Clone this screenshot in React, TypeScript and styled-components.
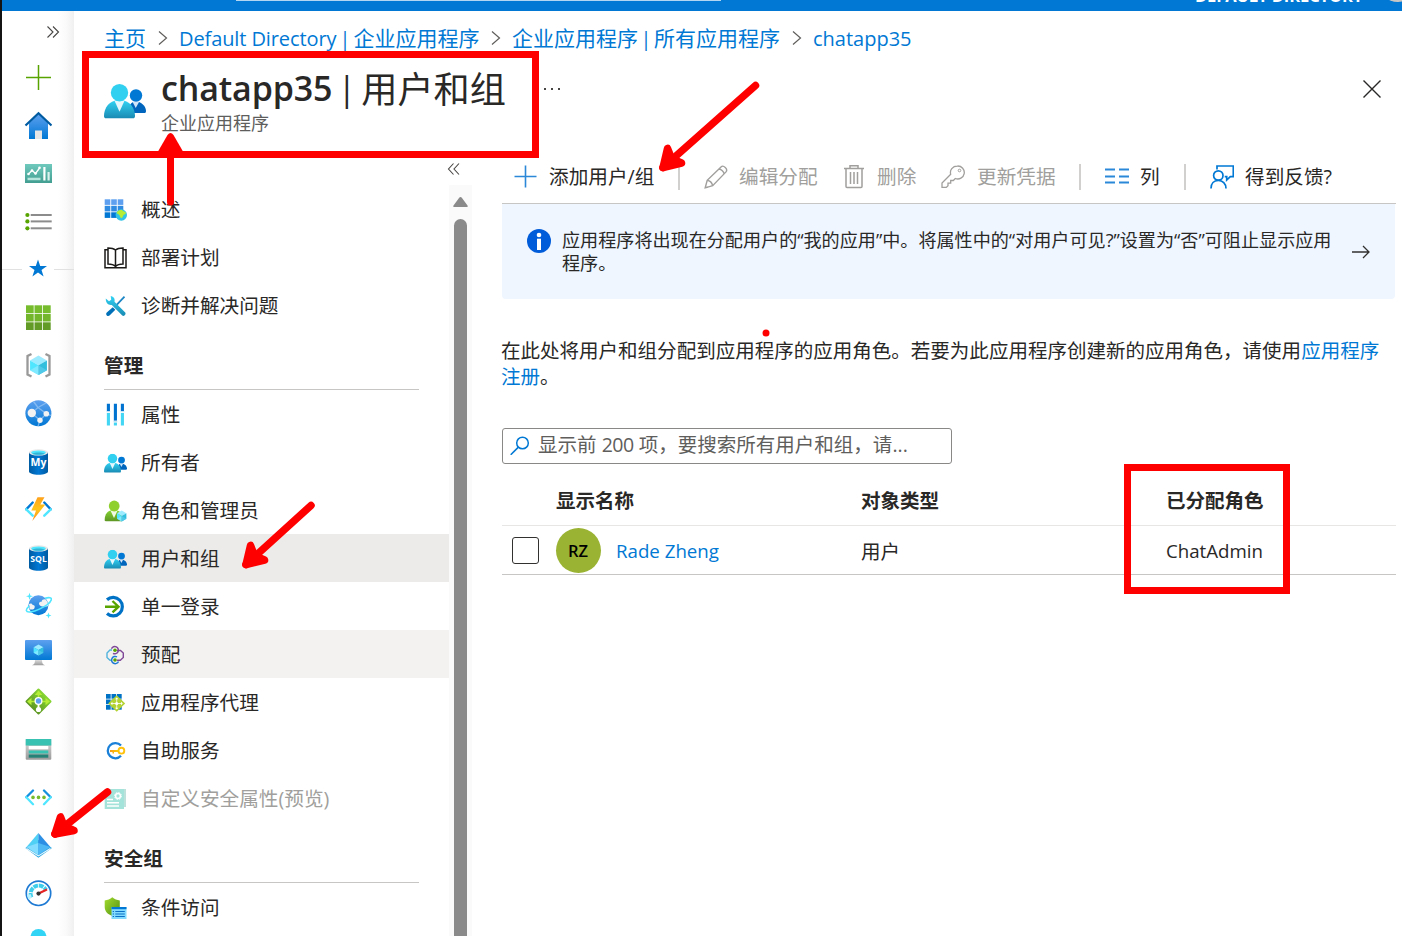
import React from "react";
import styled, { createGlobalStyle } from "styled-components";

const Global = createGlobalStyle`
  *, *::before, *::after { box-sizing: border-box; }
  body {
    margin: 0;
    overflow: hidden;
    background: #fff;
    color: #292827;
    font-family: "Open Sans", "Noto Sans CJK SC", sans-serif;
    font-size: 19.53px;
  }
  svg { display: block; flex: none; }
`;

const Portal = styled.div`
  position: relative;
  display: flex;
  width: 1402px;
  height: 936px;
  overflow: hidden;
`;
const WindowEdge = styled.div`
  flex: none;
  width: 2px;
  background: #141414;
`;
const Shell = styled.div`
  flex: 1;
  display: flex;
  flex-direction: column;
  min-width: 0;
`;
const TopBar = styled.header`
  flex: none;
  display: flex;
  height: 11px;
  background: #0078d4;
  overflow: hidden;
`;
const GlobalSearch = styled.div`
  flex: none;
  width: 485px;
  height: 1px;
  margin-left: 234px;
  background: #b3d7f2;
`;
const DirectoryName = styled.div`
  flex: none;
  margin: -15px 0 0 474px;
  width: 170px;
  height: 20px;
  color: #fff;
  font-size: 16.5px;
  line-height: 22px;
  font-weight: 700;
  letter-spacing: -0.1px;
  white-space: nowrap;
`;
const Account = styled.div`
  flex: none;
  width: 40px;
  height: 40px;
  margin: -38px 0 0 13px;
  border-radius: 50%;
  background: #c8c6c4;
`;
const Columns = styled.div`
  flex: 1;
  display: flex;
  min-height: 0;
`;
const Rail = styled.nav`
  flex: none;
  display: flex;
  flex-direction: column;
  width: 72px;
  background: linear-gradient(to right, #fff 56px, #fafafa 64px, #f0f0f0 72px);
  overflow: hidden;
`;
const RailToggle = styled.div`
  flex: none;
  display: flex;
  align-items: center;
  justify-content: flex-end;
  height: 42px;
  padding-right: 14px;
`;
const RailItem = styled.div`
  flex: none;
  display: flex;
  align-items: center;
  height: 48px;
  padding-left: 22px;
`;
const FavoriteRow = styled(RailItem)`
  padding-left: 0;
  gap: 2px;
`;
const Rule = styled.div<{ $w: number }>`
  width: ${(p) => p.$w}px;
  height: 1px;
  background: #e1e1e1;
`;
const Main = styled.main`
  flex: 1;
  display: flex;
  flex-direction: column;
  min-width: 0;
`;
const Breadcrumb = styled.div`
  flex: none;
  display: flex;
  align-items: center;
  height: 42px;
  padding: 12px 0 0 30px;
  color: #0078d4;
  font-size: 21px;
  line-height: 30px;
  white-space: nowrap;
`;
const Crumb = styled.span<{ $w: number }>`
  width: ${(p) => p.$w}px;
`;
const CrumbArrow = styled.span`
  display: flex;
  justify-content: center;
  width: 33px;
`;
const Latin = styled.span<{ $size?: number; $track?: number }>`
  font-size: ${(p) => (p.$size ? `${p.$size}px` : "inherit")};
  letter-spacing: ${(p) => p.$track ?? 0}px;
`;
const Pipe = styled.span<{ $w: number; $size: number }>`
  display: inline-block;
  width: ${(p) => p.$w}px;
  font-size: ${(p) => p.$size}px;
  text-align: center;
`;
const BladeHeader = styled.div`
  flex: none;
  display: flex;
  height: 105px;
  padding: 10px 20px 0 30px;
`;
const BladeIcon = styled.div`
  width: 57px;
  padding-top: 21px;
`;
const BladeTitles = styled.div`
  width: 380px;
`;
const Title = styled.h1`
  display: flex;
  height: 50px;
  margin: 0;
  font-size: 36.2px;
  line-height: 50px;
  font-weight: 400;
  white-space: pre;
  strong { font-weight: 600; font-size: 34px; letter-spacing: -0.15px; }
  em { font-style: normal; padding-top: 1px; }
`;
const Subtitle = styled.div`
  color: #605e5c;
  font-size: 18px;
  line-height: 20px;
`;
const MoreDots = styled.div`
  display: flex;
  gap: 5px;
  padding: 25px 0 0 3px;
  i { width: 2px; height: 2px; background: #484644; }
`;
const CloseButton = styled.div`
  margin-left: auto;
  padding-top: 16px;
`;
const Body = styled.div`
  flex: 1;
  display: flex;
  min-height: 0;
`;
const Menu = styled.aside`
  flex: none;
  width: 375px;
  padding-top: 28px;
  overflow: hidden;
  font-size: 19.65px;
`;
const MenuItem = styled.div<{ $bg?: string; $muted?: boolean }>`
  display: flex;
  align-items: center;
  gap: 14px;
  height: 48px;
  padding: 0 0 0 29px;
  line-height: 28px;
  background: ${(p) => p.$bg ?? "transparent"};
  color: ${(p) => (p.$muted ? "#a19f9d" : "inherit")};
  white-space: nowrap;
`;
const MenuLabel = styled.span<{ $drop: number }>`
  padding-top: ${(p) => p.$drop * 2}px;
`;
const MenuSection = styled.div<{ $h: number }>`
  height: ${(p) => p.$h}px;
  margin: 0 30px;
  padding-top: 22px;
  border-bottom: 1px solid #c8c6c4;
  font-weight: 700;
  line-height: ${(p) => p.$h - 32}px;
`;
const ScrollColumn = styled.div`
  flex: none;
  display: flex;
  flex-direction: column;
  align-items: center;
  width: 23px;
`;
const Collapse = styled.div`
  flex: none;
  width: 23px;
  height: 27px;
  padding-top: 4px;
  svg { margin-left: -2px; }
`;
const Track = styled.div`
  flex: 1;
  display: flex;
  flex-direction: column;
  align-items: center;
  width: 23px;
  padding-top: 12px;
  background: #fafafa;
`;
const Thumb = styled.div`
  flex: 1;
  width: 13px;
  margin: 12px 0 0 -1px;
  border-radius: 7px 7px 0 0;
  background: #8a8a8a;
`;
const Content = styled.section`
  flex: 1;
  display: flex;
  flex-direction: column;
  min-width: 0;
  padding: 0 7px 0 30px;
`;
const Toolbar = styled.div`
  flex: none;
  display: flex;
  align-items: center;
  height: 46px;
  margin-right: -1px;
  padding: 0 0 8px 11px;
  border-bottom: 1px solid #c8c6c4;
  font-size: 19.65px;
  line-height: 28px;
  white-space: nowrap;
`;
const Command = styled.div<{ $w: number; $gap: number; $muted?: boolean }>`
  flex: none;
  display: flex;
  align-items: center;
  gap: ${(p) => p.$gap}px;
  width: ${(p) => p.$w}px;
  color: ${(p) => (p.$muted ? "#a19f9d" : "inherit")};
`;
const Separator = styled.div<{ $after: number }>`
  flex: none;
  width: 2px;
  height: 26px;
  margin-right: ${(p) => p.$after}px;
  background: #d2d0ce;
`;
const Banner = styled.div`
  flex: none;
  display: flex;
  height: 95px;
  padding: 25px 24px 0 25px;
  border-radius: 0 0 4px 4px;
  background: #eff6ff;
`;
const BannerText = styled.div`
  flex: none;
  width: 782px;
  margin: 0 5px 0 11px;
  font-size: 18.1px;
  line-height: 23px;
  white-space: nowrap;
`;
const BannerArrow = styled.div`
  padding-top: 13px;
  margin-left: 2px;
`;
const Intro = styled.p`
  margin: 39px 0 0 -1px;
  line-height: 26px;
  white-space: nowrap;
  a { color: #0078d4; }
`;
const SearchBox = styled.div`
  flex: none;
  display: flex;
  align-items: center;
  gap: 8px;
  width: 450px;
  height: 36px;
  margin-top: 38px;
  padding: 0 7px 2px;
  border: 1px solid #8a8886;
  border-radius: 3px;
  color: #605e5c;
  line-height: 28px;
  white-space: nowrap;
`;
const Table = styled.div`
  flex: none;
  margin: 11px -1px 0 0;
`;
const TableRow = styled.div<{ $head?: boolean }>`
  display: grid;
  grid-template-columns: 54px 305px 305px 1fr;
  align-items: center;
  height: ${(p) => (p.$head ? 51 : 49)}px;
  padding-bottom: ${(p) => (p.$head ? 2 : 0)}px;
  border-bottom: 1px solid ${(p) => (p.$head ? "#e8e6e4" : "#c8c6c4")};
  font-weight: ${(p) => (p.$head ? 700 : 400)};
`;
const CheckBox = styled.div`
  width: 27px;
  height: 27px;
  margin-left: 10px;
  border: 1.5px solid #323130;
  border-radius: 3px;
`;
const Person = styled.div`
  display: flex;
  align-items: center;
  gap: 15px;
  color: #0078d4;
`;
const Avatar = styled.div`
  display: flex;
  align-items: center;
  justify-content: center;
  width: 45px;
  height: 45px;
  padding-right: 1px;
  border-radius: 50%;
  background: #9ab333;
  color: #000;
  font-size: 16.5px;
  font-weight: 600;
`;
const Highlight = styled.div<{ $x: number; $y: number; $w: number; $h: number }>`
  position: absolute;
  left: ${(p) => p.$x}px;
  top: ${(p) => p.$y}px;
  width: ${(p) => p.$w}px;
  height: ${(p) => p.$h}px;
  border: 7px solid #f00;
`;
const Annotations = styled.svg`
  position: absolute;
  inset: 0;
`;
const GradientDefs = styled.svg`
  position: absolute;
`;

type Kids = { children?: React.ReactNode };
const R = ({ children }: Kids) => (
  <svg width="28" height="28" viewBox="0 0 28 28" fill="none">{children}</svg>
);
const M = ({ children, o }: Kids & { o?: number }) => (
  <svg width="24" height="24" viewBox="0 0 24 24" fill="none" opacity={o}>{children}</svg>
);

const Gradients = () => (
  <GradientDefs width="0" height="0">
    <defs>
      <linearGradient id="blue" x1="0" y1="0" x2="0" y2="1"><stop offset="0" stopColor="#5ea0ef" /><stop offset="1" stopColor="#0078d4" /></linearGradient>
      <linearGradient id="cyan" x1="0" y1="0" x2="0" y2="1"><stop offset="0" stopColor="#32d4f5" /><stop offset="1" stopColor="#198ab3" /></linearGradient>
      <linearGradient id="green" x1="0" y1="0" x2="0" y2="1"><stop offset="0" stopColor="#86d633" /><stop offset="1" stopColor="#5e9624" /></linearGradient>
      <linearGradient id="teal" x1="0" y1="0" x2="0" y2="1"><stop offset="0" stopColor="#6fcabd" /><stop offset="1" stopColor="#429e90" /></linearGradient>
      <linearGradient id="db" x1="0" y1="0" x2="1" y2="0"><stop offset="0" stopColor="#005ba1" /><stop offset="0.5" stopColor="#0078d4" /><stop offset="1" stopColor="#005ba1" /></linearGradient>
      <linearGradient id="bolt" x1="0" y1="0" x2="0" y2="1"><stop offset="0" stopColor="#fea11b" /><stop offset="0.5" stopColor="#fec51b" /><stop offset="1" stopColor="#fe8a1b" /></linearGradient>
      <linearGradient id="shield" x1="0" y1="0" x2="1" y2="1"><stop offset="0" stopColor="#a4dc2e" /><stop offset="1" stopColor="#4f8f12" /></linearGradient>
      <linearGradient id="grey" x1="0" y1="0" x2="0" y2="1"><stop offset="0" stopColor="#ddd" /><stop offset="1" stopColor="#9a9a9a" /></linearGradient>
      <linearGradient id="key" x1="0" y1="0" x2="1" y2="0"><stop offset="0" stopColor="#f79a1c" /><stop offset="1" stopColor="#ffd400" /></linearGradient>
    </defs>
  </GradientDefs>
);

const Grid9 = ({ x, y, s, g, fill }: { x: number; y: number; s: number; g: number; fill: string[] }) => (
  <>
    {[0, 1, 2].map((j) => [0, 1, 2].map((i) => (
      <rect key={`${i}${j}`} x={x + i * (s + g)} y={y + j * (s + g)} width={s} height={s} fill={fill[j]} />
    )))}
  </>
);
const Cube = ({ x, y, k }: { x: number; y: number; k: number }) => (
  <g transform={`translate(${x} ${y}) scale(${k})`}>
    <path d="M0-10 8.7-5 0 0-8.7-5z" fill="#9cebff" />
    <path d="M-8.7-5 0 0V10L-8.7 5z" fill="#50e6ff" />
    <path d="M8.7-5 0 0V10L8.7 5z" fill="#32bedd" />
    <path d="M-8.7 5 0 0 0 10z" fill="#9cebff" opacity=".6" />
    <path d="M0 0 8.7 5 0 10z" fill="#50c8e8" />
  </g>
);
const Database = ({ label, size }: { label: string; size: number }) => (
  <R>
    <path d="M5 5.3v19.2c0 1.8 4.3 3.2 9.5 3.2s9.500-1.400 9.500-3.200V5.300z" fill="url(#db)" />
    <ellipse cx="14.500" cy="5.400" rx="9.500" ry="3.200" fill="#e8e8e8" />
    <ellipse cx="14.500" cy="5.600" rx="7.400" ry="2.200" fill="#50e6ff" />
    <path d="M8 6.700c1.600-.7 3.800-1.100 6.500-1.100s4.900.4 6.500 1.100c-1.300.7-3.700 1.100-6.500 1.100s-5.200-.4-6.500-1.100z" fill="#32b4d4" />
    <text x="14.500" y="19.300" textAnchor="middle" fontSize={size} fontWeight="700" fill="#fff" fontFamily="Open Sans">{label}</text>
  </R>
);

const railIcons: React.ReactNode[] = [
  <R><path d="M2 14.500h25M14.500 2v25" stroke="#57a300" strokeWidth="1.500" /></R>,
  <R>
    <path d="M14.500 3 24 12v16H5V12z" fill="url(#blue)" />
    <path d="M11 28v-8.500h7V28z" fill="#e6e6e6" />
    <path d="M1.500 14.500 14.500 2.300 27.500 14.500" stroke="#005ba1" strokeWidth="2.200" />
  </R>,
  <R>
    <rect x="1" y="5" width="27" height="19" fill="url(#teal)" />
    <path d="M4.500 15 8 11.500l3.500 3 4.500-6" stroke="#fff" strokeWidth="1.300" />
    <circle cx="4.500" cy="15" r="1.300" fill="#fff" /><circle cx="8" cy="11.500" r="1.300" fill="#fff" />
    <circle cx="11.500" cy="14.500" r="1.300" fill="#fff" /><circle cx="15.500" cy="8.700" r="1.300" fill="#fff" />
    <path d="M3.500 18.700h13v2.500h-13z" fill="#b5e5dd" />
    <path d="M19.300 8h2.200v13.500h-2.200z" fill="#fff" /><path d="M23.500 13h2.200v8.500h-2.200z" fill="#d8f1ed" />
  </R>,
  <R>
    {[8, 14.4, 21.3].map((y) => (
      <g key={y}><circle cx="3.400" cy={y} r="2.100" fill="#57a300" /><path d={`M6.700 ${y}H27.700`} stroke="#8c8c8c" strokeWidth="2" /></g>
    ))}
  </R>,
  null,
  <R><g><Grid9 x={2} y={2.300} s={7.700} g={0.800} fill={["#76bc2d", "#73b62b", "#629b25"]} /></g></R>,
  <R>
    <path d="M7.500 3 3.500 5v18.500l4 2M21.500 3l4 2v18.500l-4 2" stroke="#999" strokeWidth="2.300" />
    <Cube x={14.500} y={14.300} k={0.970} />
  </R>,
  <R>
    <circle cx="14.400" cy="14.300" r="13" fill="url(#blue)" />
    <path d="M7.700 14 14 8.500l8.300 6.200L16 21.300zM14 8.500 9.500 2.500M14 8.500l8-4.500M16 21.300l-2 6M22.300 14.700l4.700 2" stroke="#9cc9f5" strokeWidth="1.300" opacity=".7" />
    <circle cx="7.800" cy="14" r="4.200" fill="#f2f2f2" /><circle cx="22.300" cy="14.700" r="2.800" fill="#f2f2f2" /><circle cx="16" cy="21.300" r="2.700" fill="#f2f2f2" />
  </R>,
  <Database label="My" size={10.500} />,
  <R>
    <path d="M8.700 7.500 2.300 14.300" stroke="#0078d4" strokeWidth="2.400" strokeLinecap="round" /><path d="m2.300 14.300 6.400 6.400" stroke="#50e6ff" strokeWidth="2.400" strokeLinecap="round" />
    <path d="m20.300 7.500 6.400 6.800" stroke="#0078d4" strokeWidth="2.400" strokeLinecap="round" /><path d="m26.700 14.300-6.400 6.400" stroke="#50e6ff" strokeWidth="2.400" strokeLinecap="round" />
    <path d="M13.500 2.300h7l-4.200 7.200h5L8.300 26l3.700-10.500H7.300z" fill="url(#bolt)" />
  </R>,
  <Database label="SQL" size={8.700} />,
  <R>
    <circle cx="14.400" cy="14.300" r="10" fill="url(#blue)" />
    <path d="M5 13c1.500-1 3-.5 3.500.8 2 .2 2.700 1.700 2 3.200-.5 1.500-2.500 1.800-5 1.300zM15 12.500c.2-1.500 1.600-1.700 2.600-1.700C18 8.500 20 8 21.700 8.500c2 2 2.700 5 2.400 6.500-2.700.8-8.800 1.200-9.100-2.500z" fill="#f2f2f2" />
    <path d="M21 7.300c4-1.200 6.700-.8 6.400 1-.4 2.600-5.400 6.600-12 9.800-6.600 3.100-12.500 3.900-13 1.600-.3-1.400 1.100-3.100 3-4.800" stroke="#50e6ff" strokeWidth="1.600" />
    <path d="M5.500 1.700 6.400 4.500 9 5.300 6.400 6.100 5.500 9l-.9-2.900L2 5.300l2.600-.8zM24.500 21.500l.8 2.200 2.200.8-2.200.8-.8 2.200-.8-2.200-2.200-.8 2.200-.8z" fill="#50e6ff" />
  </R>,
  <R>
    <rect x="1" y="1" width="27" height="20" rx="1" fill="url(#blue)" />
    <path d="M11 21h7c0 3 .6 4.300 3 5.300H8c2.400-1 3-2.300 3-5.300z" fill="url(#grey)" />
    <Cube x={14.500} y={11} k={0.560} />
  </R>,
  <R>
    <rect x="5" y="5" width="19" height="19" rx="1" transform="rotate(45 14.500 14.500)" fill="url(#green)" />
    <path d="M14.500 4.500v20M5 14.500h19" stroke="#b4ec36" strokeWidth="1.700" />
    <path d="m10.800 8 3.700-4.500L18.200 8zM7.500 10.800 3 14.500l4.500 3.700zM21.500 10.800l4.500 3.700-4.500 3.700z" fill="#b4ec36" />
    <path d="M14.500 16v6" stroke="#fff" strokeWidth="1.700" />
    <circle cx="14.500" cy="14" r="4" fill="#fff" /><circle cx="14.500" cy="14" r="2.700" fill="#5ea0ef" /><circle cx="14.500" cy="22.500" r="2.600" fill="#fff" />
  </R>,
  <R>
    <rect x="1.700" y="4" width="25.600" height="20.700" rx="1" fill="url(#grey)" />
    <path d="M1.700 4h25.600v6.500H1.700z" fill="#37c2b1" /><path d="M4.700 11h19.600v3.300H4.700z" fill="#fff" />
    <path d="M4.700 15.500h19.600v3H4.700z" fill="#37c2b1" /><path d="M4.700 19.500h19.600v3.200H4.700z" fill="#258277" />
  </R>,
  <R>
    <path d="M9 7.500 2.300 14.300M20 7.500l6.700 6.800" stroke="#1490df" strokeWidth="2.300" strokeLinecap="round" />
    <path d="M2.300 14.300 9 21.200M26.700 14.300 20 21.200" stroke="#50e6ff" strokeWidth="2.300" strokeLinecap="round" />
    <circle cx="9" cy="14.400" r="1.800" fill="#76bc2d" /><circle cx="14.500" cy="14.400" r="1.800" fill="#76bc2d" /><circle cx="20" cy="14.400" r="1.800" fill="#76bc2d" />
  </R>,
  <R>
    <path d="M1.300 17 14.400 9 28 17l-13.600 9.700z" fill="#2ea7e0" />
    <path d="M14.400 2 2.500 16l11.900 8z" fill="#50d0f5" /><path d="m14.400 2 12 14-12 8z" fill="#2c8fe4" />
    <path d="M14.400 12 2.500 16l11.900 8z" fill="#84dcff" /><path d="m14.400 12 12 4-12 8z" fill="#4db8f4" />
    <path d="m2.500 17.500 11.900 7.400 12-7.400" stroke="#e8f8ff" strokeWidth="1.200" />
  </R>,
  <R>
    <circle cx="14.500" cy="14.300" r="12.200" fill="#fff" stroke="#1f7ad4" strokeWidth="1.700" />
    <path d="M7.500 18.500A8 8 0 1 1 22 11" stroke="#3fcdec" strokeWidth="4" strokeDasharray="4.700 .8" />
    <path d="M6.200 19.500a9.500 9.500 0 0 1-1.200-4" stroke="#b8f2ff" strokeWidth="4" />
    <path d="m14.500 14.500 8.500-4" stroke="#e62323" strokeWidth="2" /><circle cx="14.500" cy="14.600" r="2.100" fill="#333" />
  </R>,
  <R><circle cx="14.500" cy="10" r="8" fill="#32d4f5" /><path d="M2 28c0-12 10-18 12.500-18S27 16 27 28z" fill="#32c4e5" /></R>,
];

const PeopleShapes = () => (
  <>
    <circle cx="32" cy="11.500" r="6.200" fill="#0078d4" />
    <path d="M24 29c0-7 3-11.500 8-11.500S42 22 42 27c0 1.500-.6 2-1.500 2z" fill="#0065bd" />
    <path d="m28.500 17.800 3.200 6.200 3.500-6.200z" fill="#cfe6fa" />
    <path d="M0 32c0-8 5-16 15.500-16S31 24 31 32c0 1.500-.8 2.300-2 2.300H2C.8 34.300 0 33.500 0 32z" fill="url(#cyan)" />
    <path d="m10.500 16.800 5 11 5-11z" fill="#e3f7fd" />
    <circle cx="15.500" cy="8.700" r="8.700" fill="#32d0f0" />
  </>
);

const icons = {
  overview: (
    <M>
      <g><Grid9 x={1.700} y={1.300} s={5.600} g={0.900} fill={["#5ea0ef", "#2f8ae2", "#0078d4"]} /></g>
      <circle cx="18.300" cy="17" r="5.700" fill="#32c4e5" />
      <path d="M13.500 15c1-2.300 3-3 5-3.200 1.500 1 2.700 2 4.300 2.500.3 1.800-1.300 2.300-2.300 2.700-.5 1.500-1 3-2.200 3.200-1.600-.8-1-3-2.300-3.500z" fill="#b4ec36" />
    </M>
  ),
  book: (
    <M><path d="M5 3.800H2V21.800H23V3.800H20M12.500 4C10.500 2.300 8 2 5 2v16c3 0 5.500.4 7.500 2.600C14.500 18.400 17 18 20 18V2c-3 0-5.500.3-7.500 2zV20.600M2 21.800h21" stroke="#1b1a19" strokeWidth="1.500" /></M>
  ),
  tools: (
    <M>
      <path d="m21.500 2.700-10 10.500" stroke="#1c86c4" strokeWidth="1.800" />
      <path d="m9.800 13.200 2.500 2.500-5.500 5.600c-.9.900-2.200.9-3 .1s-.9-2.100 0-3z" fill="#0070b8" />
      <path d="M2.800 4.600 6 7.200l2.200-1.400L7.700 2c3 .3 4.600 3 3.800 5.700L22 18.300c1.800 2-1.100 4.800-3 3L8.800 10.900C5.700 11.700 2.500 9 2.800 4.600z" fill="url(#cyan)" />
    </M>
  ),
  props: (
    <M>
      <path d="M5.400 1.700V9M12.400 1.700v17M19.400 1.700V9" stroke="#0072d0" strokeWidth="3.100" />
      <path d="M5.400 11v12.500M12.400 20.500v3M19.400 11v12.500" stroke="#43d6f4" strokeWidth="3.100" />
      <path d="M3.500 9.700h3.800M10.500 19.500h3.800M17.500 9.700h3.800" stroke="#c5e4f3" strokeWidth="1.300" />
    </M>
  ),
  people: (
    <M><svg x="1" y="3.800" width="23" height="19.200" viewBox="0 0 42 35" fill="none"><PeopleShapes /></svg></M>
  ),
  roles: (
    <M>
      <path d="M1.700 22c0-6 3-10 9.300-10s8.700 4 8.700 10c0 .8-.4 1.200-1 1.200H2.700c-.6 0-1-.4-1-1.200z" fill="url(#green)" />
      <path d="m7.700 13 3.300 7 3.300-7z" fill="#f2fbe2" /><circle cx="11.200" cy="8" r="5.400" fill="#8fd02e" />
      <Cube x={18.700} y={18} k={0.540} />
    </M>
  ),
  sso: (
    <M>
      <path d="M4 5.800a9.200 9.200 0 1 1 0 13.700" stroke="#0072c6" strokeWidth="3.200" />
      <path d="M2 12.700h13.500M9.500 7l6 5.700-6 5.700" stroke="#57a300" strokeWidth="2.400" />
    </M>
  ),
  provision: (
    <M>
      <path d="M9 8H7l-3 3v4.500l3 2.700h2" stroke="#50b3dc" strokeWidth="1.400" /><path d="M14 8.500h3.500l2.800 2.500v4.500l-3 2.700H14" stroke="#804998" strokeWidth="1.400" />
      <path d="M8.500 6.700A3.600 3.600 0 1 1 10 11.300" stroke="#804998" strokeWidth="1.500" /><path d="M15.500 19.500A3.600 3.600 0 1 1 14 14.900" stroke="#1f7ad4" strokeWidth="1.500" />
      <circle cx="12" cy="8.300" r="1.800" fill="#57a300" /><circle cx="12" cy="18" r="1.800" fill="#57a300" />
    </M>
  ),
  proxy: (
    <M>
      <g><Grid9 x={3} y={4} s={4.700} g={0.800} fill={["#0072c6", "#0072c6", "#0072c6"]} /></g>
      <path d="m13.700 5.300 8.500 8.200-8.500 8.200-8.500-8.200z" fill="#b3d334" />
      <path d="M13.700 8.500v10M8.500 13.500h10.500" stroke="#fff" strokeWidth=".8" /><circle cx="13.700" cy="13.500" r="1.600" fill="#fff" />
      <path d="m12 9.300 1.700-1.800 1.700 1.800zM12 17.700l1.700 1.800 1.700-1.800zM9.400 11.800l-1.800 1.700 1.800 1.700zM18 11.800l1.800 1.700-1.800 1.700z" fill="#fff" />
    </M>
  ),
  selfService: (
    <M>
      <path d="M18 7.600a7.600 7.600 0 1 0 0 10.200" stroke="#1a80d8" strokeWidth="2.300" />
      <path d="M7 12h9v2h-5v1.600H9.500V14H7z" fill="url(#key)" />
      <circle cx="18.400" cy="12.700" r="2.900" stroke="#ffc20e" strokeWidth="1.900" />
    </M>
  ),
  attributes: (
    <M o={0.500}>
      <path d="M6 3h17v18H6z" fill="#7fc4b8" /><path d="M1.700 3H21v20H1.700z" fill="#4cc8b6" />
      <circle cx="15" cy="10" r="2.400" stroke="#fff" strokeWidth="1.500" />
      <circle cx="15" cy="10" r="3.500" stroke="#fff" strokeWidth="1" strokeDasharray="1.400 1.350" />
      <path d="M4 13.500h6M4 16.800h12M4 20h12" stroke="#fff" strokeWidth="1.400" />
    </M>
  ),
  shield: (
    <M>
      <path d="M1.700 5.500C4.500 5.300 7.200 4 9.300 2.300 11.500 4 14 5.300 16.800 5.500V12c0 4.500-3.300 7.500-7.500 9-4.200-1.500-7.600-4.500-7.600-9z" fill="url(#shield)" />
      <path d="M8.500 12H23.500V24H8.500z" fill="#83dcff" /><path d="M8.500 12H23.500v2.200H8.500z" fill="#0078d4" />
      <path d="M12.300 16.500h9.500M12.300 19h9.500M12.300 21.500h9.500" stroke="#0b6fc8" strokeWidth="1.100" /><path d="M9.700 16.500h1.300M9.700 19h1.300M9.700 21.500h1.300" stroke="#0b6fc8" strokeWidth="1.100" />
    </M>
  ),
};

const Chevrons = ({ left }: { left?: boolean }) => (
  <svg width="14" height="14" viewBox="0 0 14 14" fill="none">
    <path d={left ? "M6.500 1.500 1.500 7l5 5.500M12 1.500 7 7l5 5.500" : "M1.500 1.500 7 7l-5.500 5.500M7 1.500 12.500 7 7 12.500"} stroke="#484644" strokeWidth="1.100" />
  </svg>
);
const Separation = () => (
  <CrumbArrow><svg width="10" height="16" viewBox="0 0 10 16" fill="none"><path d="m1 1.500 7.500 6.500L1 14.500" stroke="#605e5c" strokeWidth="1.200" /></svg></CrumbArrow>
);

type Entry = { icon: React.ReactNode; label: string; bg?: string; muted?: boolean };
const general: Entry[] = [
  { icon: icons.overview, label: "概述" },
  { icon: icons.book, label: "部署计划" },
  { icon: icons.tools, label: "诊断并解决问题" },
];
const manage: Entry[] = [
  { icon: icons.props, label: "属性" },
  { icon: icons.people, label: "所有者" },
  { icon: icons.roles, label: "角色和管理员" },
  { icon: icons.people, label: "用户和组", bg: "#edebe9" },
  { icon: icons.sso, label: "单一登录" },
  { icon: icons.provision, label: "预配", bg: "#f3f2f1" },
  { icon: icons.proxy, label: "应用程序代理" },
  { icon: icons.selfService, label: "自助服务" },
  { icon: icons.attributes, label: "自定义安全属性(预览)", muted: true },
];
const security: Entry[] = [{ icon: icons.shield, label: "条件访问" }];

const Entries = ({ list, drop = 0 }: { list: Entry[]; drop?: number }) => (
  <>
    {list.map((e) => (
      <MenuItem key={e.label} $bg={e.bg} $muted={e.muted}>{e.icon}<MenuLabel $drop={drop}>{e.label}</MenuLabel></MenuItem>
    ))}
  </>
);

type Point = [number, number];
const Arrow = ({ tail, tip, a, b }: { tail: Point; tip: Point; a: Point; b: Point }) => {
  const notch = [0, 1].map((i) => ((a[i] + b[i]) / 2) * 0.75 + tip[i] * 0.25);
  return (
    <g stroke="#f00" strokeWidth="7.500" strokeLinecap="round" strokeLinejoin="round">
      <path d={`M${tail}L${tip}`} /><path d={`M${a}L${tip}L${b}L${notch}Z`} fill="#f00" />
    </g>
  );
};

export default function App() {
  return (
    <Portal>
      <Global />
      <Gradients />
      <WindowEdge />
      <Shell>
        <TopBar>
          <GlobalSearch />
          <DirectoryName>DEFAULT DIRECTORY</DirectoryName>
          <Account />
        </TopBar>
        <Columns>
          <Rail>
            <RailToggle><Chevrons /></RailToggle>
            {railIcons.map((icon, i) =>
              icon ? <RailItem key={i}>{icon}</RailItem> : (
                <FavoriteRow key={i}>
                  <Rule $w={20} />
                  <R><path d="m14 4.500 2.200 6.500H23l-5.500 4 2.100 6.500-5.600-4-5.600 4 2.100-6.500-5.500-4h6.800z" fill="#0078d4" /></R>
                  <Rule $w={20} />
                </FavoriteRow>
              ))}
          </Rail>
          <Main>
            <Breadcrumb>
              <Crumb $w={42}>主页</Crumb>
              <Separation />
              <Crumb $w={300}><Latin $size={20} $track={-0.1}>Default Directory</Latin><Pipe $w={17} $size={20}>|</Pipe>企业应用程序</Crumb>
              <Separation />
              <Crumb $w={268}>企业应用程序<Pipe $w={16} $size={20}>|</Pipe>所有应用程序</Crumb>
              <Separation />
              <Crumb $w={100}><Latin $size={20}>chatapp35</Latin></Crumb>
            </Breadcrumb>
            <BladeHeader>
              <BladeIcon>
                <svg width="42" height="35" viewBox="0 0 42 35" fill="none"><PeopleShapes /></svg>
              </BladeIcon>
              <BladeTitles>
                <Title><strong>chatapp35</strong><Pipe $w={29} $size={34}>|</Pipe><em>用户和组</em></Title>
                <Subtitle>企业应用程序</Subtitle>
              </BladeTitles>
              <MoreDots><i /><i /><i /></MoreDots>
              <CloseButton>
                <svg width="20" height="20" viewBox="0 0 20 20" fill="none"><path d="m1.500 1.500 17 17M18.500 1.500l-17 17" stroke="#292827" strokeWidth="1.400" /></svg>
              </CloseButton>
            </BladeHeader>
            <Body>
              <Menu>
                <Entries list={general} />
                <MenuSection $h={60}>管理</MenuSection>
                <Entries list={manage} drop={1} />
                <MenuSection $h={61}>安全组</MenuSection>
                <Entries list={security} drop={1} />
              </Menu>
              <ScrollColumn>
                <Collapse><Chevrons left /></Collapse>
                <Track>
                  <svg width="15" height="10" viewBox="0 0 15 10"><path d="M7.500 0c.6 0 1 .3 1.500 1l5.500 7.500c.5.800.2 1.500-.7 1.500H1.200C.3 10 0 9.300.5 8.500L6 1c.5-.7.900-1 1.500-1z" fill="#8a8a8a" /></svg>
                  <Thumb />
                </Track>
              </ScrollColumn>
              <Content>
                <Toolbar>
                  <Command $w={165} $gap={12}>
                    <M><path d="M1.500 11.500h22M12.500.5v22" stroke="#2b88d8" strokeWidth="1.600" /></M>添加用户/组
                  </Command>
                  <Separator $after={24} />
                  <Command $w={139} $gap={11} $muted>
                    <M><path d="m1.200 22.800 2-7.500L17 1.900c2.400-2.300 7.300 2 5 5L8.700 20.700zM3.200 15.300c2.700.4 4.700 2.400 5.500 5.400M15 4c2.500.6 4.500 2.500 5.200 5M1.200 22.800l3-.8" stroke="#a19f9d" strokeWidth="1.400" /></M>编辑分配
                  </Command>
                  <Command $w={98} $gap={10} $muted>
                    <M><path d="M1 3.500h20M7 3.500V.8h8v2.700M3 3.500V21.500c0 .6.400 1 1 1h14c.6 0 1-.4 1-1V3.500M7.500 7v12M11 7v12M14.500 7v12" stroke="#a19f9d" strokeWidth="1.500" /></M>删除
                  </Command>
                  <Command $w={138} $gap={12} $muted>
                    <M><path d="M16.500 1A6.500 6.500 0 1 1 14.300 13.500l-2 2H9.700v2.700H7v2.500l-1.700 1.700H1V18l8.700-8.700C8.500 5 11.500 1 16.500 1z" stroke="#a19f9d" strokeWidth="1.300" /><circle cx="18.500" cy="5.500" r="1.300" stroke="#a19f9d" /></M>更新凭据
                  </Command>
                  <Separator $after={24} />
                  <Command $w={79} $gap={11}>
                    <M><path d="M0 4.500h10M14 4.500h10M0 11.500h10M14 11.500h10M0 17.500h10M14 17.500h10" stroke="#2b88d8" strokeWidth="2" /></M>列
                  </Command>
                  <Separator $after={24} />
                  <Command $w={130} $gap={11}>
                    <M><circle cx="8.300" cy="10.500" r="4.700" stroke="#0078d4" strokeWidth="1.700" /><path d="M1 23.500c0-4.800 3-8 7.300-8s7.700 3.200 7.700 8M7 4.500V1h16.300v10.600h-3l-3.600 3.500v-3.500h-2" stroke="#0078d4" strokeWidth="1.700" /></M>得到反馈?
                  </Command>
                </Toolbar>
                <Banner>
                  <svg width="24" height="24" viewBox="0 0 24 24"><circle cx="12" cy="12" r="12" fill="#015cda" /><circle cx="12" cy="6" r="2.300" fill="#fff" /><path d="M10 9.700h4V21h-4z" fill="#fff" /></svg>
                  <BannerText>应用程序将出现在分配用户的“我的应用”中。将属性中的“对用户可见?”设置为“否”可阻止显示应用<br />程序。</BannerText>
                  <BannerArrow>
                    <svg width="20" height="20" viewBox="0 0 20 20" fill="none"><path d="M1 10h17M12 4l6 6-6 6" stroke="#323130" strokeWidth="1.300" /></svg>
                  </BannerArrow>
                </Banner>
                <Intro>在此处将用户和组分配到应用程序的应用角色。若要为此应用程序创建新的应用角色，请使用<a>应用程序<br />注册</a>。</Intro>
                <SearchBox>
                  <svg width="20" height="20" viewBox="0 0 20 20" fill="none"><circle cx="12.500" cy="8" r="5.800" stroke="#0078d4" strokeWidth="1.500" /><path d="M8.400 12.100.7 19.800" stroke="#0078d4" strokeWidth="1.500" /></svg>
                  <span>显示前 <Latin $track={-0.5}>200</Latin> 项，要搜索所有用户和组，请...</span>
                </SearchBox>
                <Table>
                  <TableRow $head><span /><span>显示名称</span><span>对象类型</span><span>已分配角色</span></TableRow>
                  <TableRow>
                    <CheckBox />
                    <Person><Avatar>RZ</Avatar><Latin $size={18.700}>Rade Zheng</Latin></Person>
                    <span>用户</span>
                    <Latin $size={18.700}>ChatAdmin</Latin>
                  </TableRow>
                </Table>
              </Content>
            </Body>
          </Main>
        </Columns>
      </Shell>
      <Highlight $x={82} $y={51} $w={457} $h={107} />
      <Highlight $x={1124} $y={464} $w={166} $h={130} />
      <Annotations width="1402" height="936" fill="none">
        <path d="M170.500 150v52" stroke="#f00" strokeWidth="7" strokeLinecap="round" />
        <path d="M167.500 135q3-4 6 0l9.500 16.500h-25z" fill="#f00" />
        <Arrow tail={[755.5, 85.5]} tip={[663, 167.5]} a={[667.5, 148.5]} b={[681.5, 163]} />
        <Arrow tail={[311, 505.5]} tip={[246, 564.5]} a={[250.5, 545.5]} b={[264.5, 560]} />
        <Arrow tail={[107.5, 792]} tip={[55, 834]} a={[60.5, 817]} b={[74, 830.5]} />
        <circle cx="766" cy="333" r="3.500" fill="#f00" />
      </Annotations>
    </Portal>
  );
}
